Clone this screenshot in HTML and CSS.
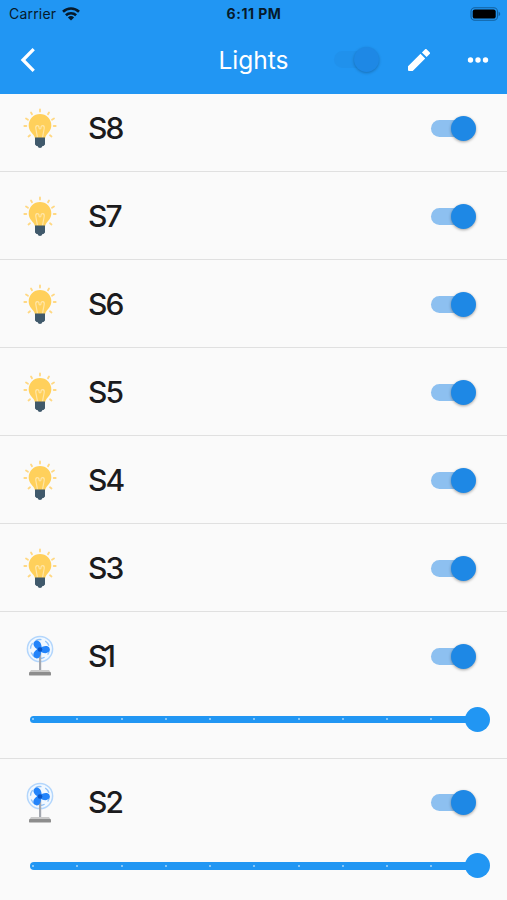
FILE: index.html
```
<!DOCTYPE html>
<html lang="en">
<head>
	<meta charset="UTF-8">
	<title>Lights</title>
	<link rel="stylesheet" href="styles.css">
</head>
<body>
	<!-- shared icons -->
	<svg class="defs">
		<symbol id="bulb" viewBox="0 0 40 44">
			<g stroke="#ffd883" stroke-width="1.8" stroke-linecap="round">
				<path d="M20 3.500v2M11 6.500l1 1.800M29 6.500l-1 1.800M6 12.500l2 1.200M34 12.500l-2 1.200M4.300 20h2M33.700 20h2M8.500 30.500l1.500-1.200M31.500 30.500l-1.500-1.200"/>
			</g>
			<path fill="#ffd05b" d="M20 8a11.300 11.300 0 0 0-11.300 11.300c0 4.700 2.700 7.200 4.800 9.800.9 1.200 1.300 2.300 1.500 3.400h10c.2-1.100.6-2.200 1.500-3.400 2.100-2.600 4.800-5.100 4.800-9.800A11.300 11.300 0 0 0 20 8z"/>
			<path fill="none" stroke="#ffe6a8" stroke-width="1.200" d="M17.500 31.500l-1.700-9c-.6-3.500 3.200-3.700 3.200-1 0 2 2 2 2 0 0-2.700 3.800-2.500 3.200 1l-1.700 9"/>
			<path fill="#40596b" d="M15 31.500h10v7l-1.500 1.500h-1a2.600 2.600 0 0 1-5 0h-1L15 38.500z"/>
		</symbol>
		<symbol id="fan" viewBox="0 0 40 44">
			<circle cx="20" cy="15" r="12.600" fill="#f1f8ff" stroke="#b3d6fc" stroke-width="1.500"/>
			<circle cx="20" cy="15" r="9.500" fill="none" stroke="#8fc2fa" stroke-width="1.300" stroke-dasharray="6 4"/>
			<rect x="19" y="19" width="2.200" height="18" fill="#a3a7af"/>
			<path fill="#c9c9c9" d="M11 36h18l2 3H9z"/>
			<rect x="9" y="38" width="22" height="3.600" rx="1.200" fill="#8d8d8d"/>
			<g fill="#2384fa">
				<path id="blade" d="M19 16.500c-1.500-1.500-5-2.800-5.500-6-.3-2.700 2-4.600 4.500-3.700 3.500 1.300 3.500 5.700 4 9.200z"/>
				<use href="#blade" transform="rotate(120 20 15.500)"/>
				<use href="#blade" transform="rotate(240 20 15.500)"/>
			</g>
			<circle cx="20" cy="15.500" r="2.300" fill="#0a55c4"/>
		</symbol>
	</svg>

	<header>
		<div class="status">
			<div class="carrier">
				<span>Carrier</span>
				<svg width="18" height="14" viewBox="0 0 18 14">
					<g fill="none" stroke="#061a2b" stroke-width="2.600">
						<path d="M1 4.800a11.500 11.500 0 0 1 16 0"/>
						<path d="M3.900 8.300a7.400 7.400 0 0 1 10.200 0"/>
					</g>
					<path fill="#061a2b" d="M9 13.600L5.900 10.500a4.500 4.500 0 0 1 6.200 0z"/>
				</svg>
			</div>
			<div class="time">6:11 PM</div>
			<svg class="battery" width="31" height="14" viewBox="0 0 31 14">
				<rect x="1" y=".8" width="26.500" height="12.400" rx="3.800" fill="none" stroke="#12609f" stroke-width="1.100"/>
				<rect x="2.700" y="2.400" width="23" height="9.200" rx="2.200"/>
				<path fill="#12609f" d="M28.600 4.800c2.100.7 2.100 3.700 0 4.400z"/>
			</svg>
		</div>
		<div class="bar">
			<svg class="back" width="16" height="26" viewBox="0 0 16 26">
				<path d="M13.700 2.200L3 13l10.700 10.800" fill="none" stroke="#fff" stroke-width="3.300"/>
			</svg>
			<h1>Lights</h1>
			<div class="actions">
				<div class="switch dim"></div>
				<svg class="edit" width="24" height="24" viewBox="0 0 24 24" fill="#fff">
					<path d="M1 18.300V22q0 1 1 1h3.700L18.200 10.500l-4.700-4.700zM22.600 6.100c.6-.6.600-1.300 0-1.900l-2.800-2.800c-.6-.6-1.300-.6-1.900 0l-3 3 4.700 4.700z"/>
				</svg>
				<svg class="more" width="22" height="8" viewBox="0 0 22 8" fill="#fff">
					<circle cx="3.500" cy="4" r="2.700"/>
					<circle cx="11" cy="4" r="2.700"/>
					<circle cx="18.500" cy="4" r="2.700"/>
				</svg>
			</div>
		</div>
	</header>

	<ul class="list">
		<li><div class="row"><svg class="icon"><use href="#bulb"/></svg><span class="name">S8</span><div class="switch"></div></div></li>
		<li><div class="row"><svg class="icon"><use href="#bulb"/></svg><span class="name">S7</span><div class="switch"></div></div></li>
		<li><div class="row"><svg class="icon"><use href="#bulb"/></svg><span class="name">S6</span><div class="switch"></div></div></li>
		<li><div class="row"><svg class="icon"><use href="#bulb"/></svg><span class="name">S5</span><div class="switch"></div></div></li>
		<li><div class="row"><svg class="icon"><use href="#bulb"/></svg><span class="name">S4</span><div class="switch"></div></div></li>
		<li><div class="row"><svg class="icon"><use href="#bulb"/></svg><span class="name">S3</span><div class="switch"></div></div></li>
		<li class="fan">
			<div class="row"><svg class="icon"><use href="#fan"/></svg><span class="name narrow">S1</span><div class="switch"></div></div>
			<div class="slider"><i></i><i></i><i></i><i></i><i></i><i></i><i></i><i></i><i></i><i></i><b></b></div>
		</li>
		<li class="fan">
			<div class="row"><svg class="icon"><use href="#fan"/></svg><span class="name">S2</span><div class="switch"></div></div>
			<div class="slider"><i></i><i></i><i></i><i></i><i></i><i></i><i></i><i></i><i></i><i></i><b></b></div>
		</li>
	</ul>
</body>
</html>
```
FILE: styles.css
```
* {
	box-sizing: border-box;
}
body {
	margin: 0;
	height: 900px;
	overflow: hidden;
	background: #fafafa;
	font-family: Inter, "Liberation Sans", sans-serif;
	display: flex;
	flex-direction: column;
}
.defs {
	position: absolute;
	width: 0;
	height: 0;
}
header {
	flex: none;
	height: 93.5px;
	background: #2196f3;
}
.status {
	height: 27px;
	padding: 0 6px 0 9px;
	display: grid;
	grid-template-columns: 1fr auto 1fr;
	align-items: center;
	color: #061a2b;
	font-size: 14px;
}
.carrier {
	display: flex;
	align-items: center;
	gap: 6px;
	letter-spacing: 0.2px;
}
.time {
	padding-right: 2px;
	font-weight: 700;
	font-size: 14px;
	letter-spacing: 0.5px;
}
.battery {
	justify-self: end;
}
.bar {
	height: 65px;
	padding: 0 18px 0 20px;
	display: grid;
	grid-template-columns: 1fr auto 1fr;
	align-items: center;
}
h1 {
	margin: 0;
	padding-right: 2px;
	color: #fff;
	font-size: 24.5px;
	font-weight: 400;
}
.actions {
	display: flex;
	align-items: center;
	justify-content: flex-end;
}
.edit {
	margin: 0 36px 0 28px;
}

/* first row is partly scrolled under the header */
.list {
	list-style: none;
	margin: 0;
	padding: 0;
	flex: 1;
	overflow: hidden;
}
.list li {
	height: 88px;
	border-bottom: 1.5px solid #e0e0e0;
}
.list li:first-child {
	height: 78.5px;
}
.list li:first-child .row {
	height: 69px;
}
.list li.fan {
	height: 146.5px;
}
.row {
	height: 88px;
	padding: 0 31px 0 20px;
	display: flex;
	align-items: center;
}
.icon {
	width: 40px;
	height: 44px;
}
.name {
	flex: 1;
	margin-left: 28px;
	padding-bottom: 1px;
	font-size: 30px;
	font-weight: 500;
	letter-spacing: -1.8px;
	color: #1b1b1d;
}
.name.narrow {
	letter-spacing: -4px;
}
.switch {
	width: 45px;
	height: 25px;
	display: flex;
	align-items: center;
}
.switch::before {
	content: "";
	width: 37px;
	height: 17px;
	border-radius: 9px;
	background: #8dc0f0;
}
.switch::after {
	content: "";
	width: 25px;
	height: 25px;
	margin-left: -17px;
	border-radius: 50%;
	background: #1e88e5;
	box-shadow: 0 1px 3px rgba(0, 0, 0, 0.35);
}
.switch.dim::before {
	background: #2091ec;
}
.switch.dim::after {
	box-shadow: 0 1px 3px rgba(0, 0, 0, 0.25);
}
.slider {
	height: 7.5px;
	margin: 15.5px 27px 0 30px;
	padding-left: 2px;
	border-radius: 4px;
	display: flex;
	align-items: center;
	background: #2196f3;
}
.slider i {
	flex: none;
	width: 2px;
	height: 2px;
	margin-right: 42.25px;
	border-radius: 50%;
	background: #a6d5fa;
}
/* handle hangs past the end of the track */
.slider b {
	flex: none;
	width: 25px;
	height: 25px;
	margin-left: -9.5px;
	border-radius: 50%;
	background: #2196f3;
}
```
